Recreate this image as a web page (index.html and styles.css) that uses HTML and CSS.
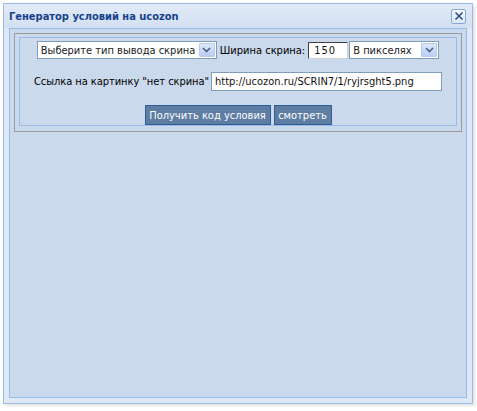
FILE: index.html
```html
<!DOCTYPE html>
<html lang="ru">
<head>
<meta charset="utf-8">
<title>Генератор условий на ucozon</title>
<link rel="stylesheet" href="styles.css">
</head>
<body>
<div class="window">
  <div class="titlebar">
    <span class="title">Генератор условий на ucozon</span>
    <span class="close">
      <svg width="10" height="10" viewBox="0 0 10 10"><path d="M1.5 1.5 L8.5 8.5 M8.5 1.5 L1.5 8.5" stroke="#2a4f8a" stroke-width="1.6" fill="none"/></svg>
    </span>
  </div>
  <div class="body">
    <div class="frame">
      <div class="panel">
        <div class="row row-type">
          <span class="combo combo-type">
            <select class="combo-input"><option>Выберите тип вывода скрина</option></select>
            <span class="combo-btn"><svg width="9" height="6" viewBox="0 0 9 6"><path d="M1 1 L4.5 4.5 L8 1" stroke="#4d6185" stroke-width="1.6" fill="none"/></svg></span>
          </span>
          <span class="label label-width">Ширина скрина:</span>
          <input class="field field-size" type="text" value="150">
          <span class="combo combo-unit">
            <select class="combo-input"><option>В пикселях</option></select>
            <span class="combo-btn"><svg width="9" height="6" viewBox="0 0 9 6"><path d="M1 1 L4.5 4.5 L8 1" stroke="#4d6185" stroke-width="1.6" fill="none"/></svg></span>
          </span>
        </div>
        <div class="row row-link">
          <span class="label label-link">Ссылка на картинку "нет скрина"</span>
          <input class="field field-link" type="text" value="http://ucozon.ru/SCRIN7/1/ryjrsght5.png">
        </div>
        <div class="row row-actions">
          <button class="btn btn-get" type="button">Получить код условия</button>
          <button class="btn btn-view" type="button">смотреть</button>
        </div>
      </div>
    </div>
  </div>
</div>
</body>
</html>
```
FILE: styles.css
```css
html, body {
  margin: 0;
  background: #ffffff;
}

body {
  padding: 3px;
  font-family: "DejaVu Sans", "Liberation Sans", sans-serif;
  font-stretch: condensed;
  font-size: 11px;
  color: #000;
}

.window {
  box-sizing: border-box;
  width: 470px;
  height: 401px;
  border: 1px solid #99bbe8;
  background: #dfe8f6;
  padding: 0 5px 5px 5px;
  display: flex;
  flex-direction: column;
  box-shadow: 2px 2px 3px rgba(0, 0, 0, 0.12);
}

.titlebar {
  height: 24px;
  display: flex;
  align-items: center;
  justify-content: space-between;
  background: linear-gradient(#e1eaf7, #d3e0f2);
  margin: 0 -5px;
  padding: 0 6px 0 5px;
}

.title {
  font-weight: bold;
  color: #15428b;
  font-size: 11px;
}

.close {
  box-sizing: border-box;
  width: 15px;
  height: 15px;
  border: 1px solid #8aa8d4;
  border-radius: 2px;
  background: linear-gradient(#f4f8fd, #dbe6f5);
  display: flex;
  align-items: center;
  justify-content: center;
}

.body {
  flex: 1;
  border: 1px solid #99bbe8;
  background: #cad9ec;
  padding: 4px;
}

.frame {
  border: 1px solid #9a9a9a;
  padding: 3px 4px 5px 4px;
}

.panel {
  border: 1px solid #99bbe8;
  padding: 3px 0 0 0;
  display: flex;
  flex-direction: column;
}

.row {
  display: flex;
  justify-content: center;
  align-items: center;
}

.row-link {
  margin-top: 13px;
}

.row-actions {
  margin-top: 14px;
}

.label {
  white-space: nowrap;
  color: #000;
}

.combo {
  box-sizing: border-box;
  display: inline-flex;
  align-items: stretch;
  height: 18px;
  border: 1px solid #7f9db9;
  background: #fff;
}

.combo-type {
  width: 180px;
}

.combo-unit {
  width: 90px;
  margin-left: 1px;
}

.combo-input {
  appearance: none;
  -webkit-appearance: none;
  flex: 1;
  min-width: 0;
  border: 0;
  margin: 0;
  padding: 0 0 0 3px;
  background: #fff;
  font: inherit;
  color: #222;
  outline: none;
}

.combo-btn {
  box-sizing: border-box;
  width: 16px;
  margin: 1px;
  border: 1px solid #b7cbf0;
  background: linear-gradient(#dde7fb, #b9cdf6);
  border-radius: 1px;
  display: flex;
  align-items: center;
  justify-content: center;
}

.label-width {
  margin-left: 3px;
  margin-right: 3px;
}

.field {
  box-sizing: border-box;
  margin: 0;
  font: inherit;
  color: #111;
  background: #fff;
  outline: none;
}

.field-size {
  width: 40px;
  height: 17px;
  border: 1px solid;
  border-color: #404040 #d4d0c8 #d4d0c8 #404040;
  padding: 0 0 0 5px;
  letter-spacing: 1px;
}

.label-link {
  margin-right: 2px;
  letter-spacing: -0.05px;
}

.field-link {
  width: 231px;
  height: 19px;
  border: 1px solid #7f9db9;
  padding: 0 0 0 3px;
}

.btn {
  box-sizing: border-box;
  height: 20px;
  margin: 0;
  padding: 0 3px;
  border: 1px solid #2d5d94;
  background: #5e7da3;
  color: #fff;
  font: inherit;
  cursor: pointer;
}

.btn-get {
  width: 126px;
}

.btn-view {
  width: 58px;
  margin-left: 3px;
}
```
